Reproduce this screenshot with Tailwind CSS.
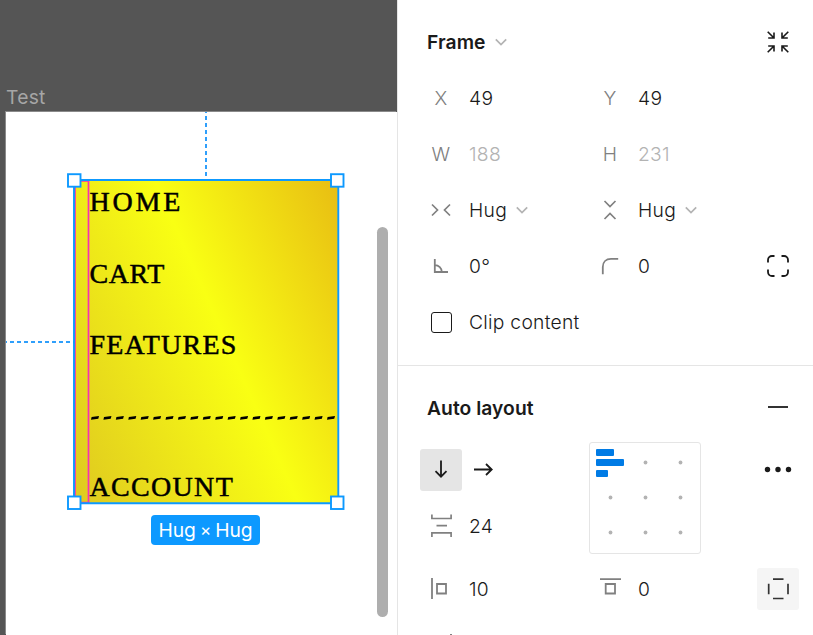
<!DOCTYPE html>
<html lang="en">
<head>
<meta charset="utf-8">
<title>Test</title>
<script src="https://cdn.jsdelivr.net/npm/@tailwindcss/browser@4"></script>
</head>
<body class="w-[813px] h-[635px] overflow-hidden bg-white font-['Inter','Liberation_Sans',sans-serif] font-[350] text-[19.25px] leading-[28px] tracking-[0.27px] text-[#1a1a1a]">
<div class="flex h-[635px] w-[813px]">
  <!-- Canvas -->
  <main class="relative w-[397px] h-[635px] shrink-0 overflow-hidden bg-[#555555]">
    <div class="absolute left-[6px] top-[83px] font-normal text-[#a6a6a6]">Test</div>
    <div class="absolute left-[6px] top-[112px] w-[391px] h-[523px] bg-white shadow-[-1px_-1px_0_#8a8a8a]"></div>
    <svg class="absolute left-0 top-0" width="397" height="635" viewBox="0 0 397 635" fill="none">
      <path d="M206 112V180" stroke="#2f9ffb" stroke-width="2" stroke-dasharray="4 3" stroke-dashoffset="3"/>
      <path d="M6 342H74" stroke="#2f9ffb" stroke-width="2" stroke-dasharray="4 3" stroke-dashoffset="3"/>
    </svg>
    <div class="absolute left-[74px] top-[180px] w-[264px] h-[323px] bg-[linear-gradient(66deg,#dfc820_0%,#f9ff13_55%,#e8bd13_100%)]">
      <svg class="ml-[15px] mt-[6px]" width="240" height="317" fill="#000" stroke="#000" stroke-width="0.5" font-family="Liberation Serif, serif" font-size="28" font-weight="400">
        <text x="0.500" y="25" textLength="91" lengthAdjust="spacing">HOME</text>
        <text x="0.500" y="96.500" textLength="75" lengthAdjust="spacing">CART</text>
        <text x="0.500" y="168" textLength="147" lengthAdjust="spacing">FEATURES</text>
        <text x="0.500" y="310" textLength="143.500" lengthAdjust="spacing">ACCOUNT</text>
      </svg>
    </div>
    <svg class="absolute left-0 top-0" width="397" height="635" viewBox="0 0 397 635" fill="none">
      <g id="dashes" fill="#000"></g>
      <path d="M75 181H88.500V502.500H75Z" stroke="#f531b3" stroke-width="1.700"/>
      <path d="M74 180H338.300V503.300H74Z" stroke="#0d99ff" stroke-width="1.900"/>
      <g fill="#fff" stroke="#0d99ff" stroke-width="1.900">
        <rect x="68" y="174.200" width="12.500" height="12.500"/>
        <rect x="331" y="174.200" width="12.500" height="12.500"/>
        <rect x="68" y="496.500" width="12.500" height="12.500"/>
        <rect x="331" y="496.500" width="12.500" height="12.500"/>
      </g>
    </svg>
    <div class="absolute left-[151px] top-[515px] flex w-[109px] h-[30px] items-center justify-center gap-[4px] rounded-[4px] bg-[#0d99ff] font-normal text-white tracking-[0px]"><span>Hug</span><span class="text-[17px]">×</span><span>Hug</span></div>
    <div class="absolute left-[377px] top-[227px] w-[11px] h-[390px] rounded-full bg-[#aeaeae]"></div>
  </main>

  <!-- Properties -->
  <aside class="w-[416px] h-[635px] shrink-0 overflow-hidden bg-white border-l border-[#e5e5e5]">
    <section class="h-[366px] pt-[14px] pl-[22px] border-b border-[#e5e5e5]">
      <div class="flex h-[56px] items-center">
        <h2 class="ml-[7px] font-semibold tracking-[0.1px]">Frame</h2>
        <svg class="ml-[9px]" width="12" height="8" fill="none" stroke="#b3b3b3" stroke-width="1.700"><path d="M.8 1.300L6 6.500l5.200-5.200"/></svg>
        <div class="flex-1"></div>
        <div class="mr-[14px] flex size-[42px] items-center justify-center">
          <svg width="24" height="24" fill="none" stroke="#1a1a1a" stroke-width="1.600"><path d="M1.700 1.700L8 8M8 2.500V8H2.200M22.300 1.700L16 8M16 2.500V8h5.800M1.700 22.300L8 16M8 21.500V16H2.200M22.300 22.300L16 16M16 21.500V16h5.800"/></svg>
        </div>
      </div>
      <div class="grid grid-cols-[42px_127px_42px_126px_42px] auto-rows-[56px] items-center">
        <span class="text-center text-[#808080] font-light">X</span><span class="pl-[7px]">49</span>
        <span class="text-center text-[#808080] font-light">Y</span><span class="pl-[7px]">49</span><span></span>
        <span class="text-center text-[#808080] font-light">W</span><span class="pl-[7px] text-[#b3b3b3]">188</span>
        <span class="text-center text-[#808080] font-light">H</span><span class="pl-[7px] text-[#b3b3b3]">231</span><span></span>

        <svg class="mx-auto" width="20" height="14" fill="none" stroke="#808080" stroke-width="1.700"><path d="M1 1.500L6.500 7 1 12.500M19 1.500L13.500 7l5.500 5.500"/></svg>
        <span class="flex items-center gap-[9px] pl-[7px]">Hug<svg width="12" height="8" fill="none" stroke="#b3b3b3" stroke-width="1.700"><path d="M.8 1.300L6 6.500l5.200-5.200"/></svg></span>
        <svg class="mx-auto" width="14" height="20" fill="none" stroke="#808080" stroke-width="1.700"><path d="M1.500 1L7 6.500 12.500 1M1.500 19L7 13.500l5.500 5.500"/></svg>
        <span class="flex items-center gap-[9px] pl-[7px]">Hug<svg width="12" height="8" fill="none" stroke="#b3b3b3" stroke-width="1.700"><path d="M.8 1.300L6 6.500l5.200-5.200"/></svg></span><span></span>

        <svg class="mx-auto" width="16" height="16" fill="none" stroke="#808080" stroke-width="1.800"><path d="M1.800 1V14H15M1.800 7.200c4 0 7 2.700 7 6.800"/></svg>
        <span class="pl-[7px]">0°</span>
        <svg class="mx-auto" width="18" height="18" fill="none" stroke="#808080" stroke-width="1.800"><path d="M1.800 17.200V10C1.800 5 5 1.900 10 1.900h7.200"/></svg>
        <span class="pl-[7px]">0</span>
        <svg class="mx-auto" width="24" height="24" fill="none" stroke="#1a1a1a" stroke-width="1.800"><path d="M2 8.500V6a4 4 0 0 1 4-4h2.500M15.500 2H18a4 4 0 0 1 4 4v2.500M22 15.500V18a4 4 0 0 1-4 4h-2.500M8.500 22H6a4 4 0 0 1-4-4v-2.500"/></svg>

        <span class="mx-auto size-[21px] rounded-[3px] border border-[#1a1a1a]"></span>
        <span class="col-span-4 pl-[7px]">Clip content</span>
      </div>
    </section>

    <section class="pt-[14px] pl-[22px]">
      <div class="flex h-[56px] items-center justify-between">
        <h2 class="ml-[7px] font-semibold tracking-[0.05px]">Auto layout</h2>
        <span class="mr-[25px] mb-[3px] h-[2px] w-[20px] bg-[#333]"></span>
      </div>
      <div class="grid grid-cols-[42px_127px_42px_126px_42px] grid-rows-[68px_44px_82px_40px]">
        <div class="mt-[13px] flex size-[42px] items-center justify-center rounded-[3px] bg-[#e5e5e5]">
          <svg width="14" height="20" fill="none" stroke="#1a1a1a" stroke-width="1.800"><path d="M7 .5V16.500M1.500 11.200L7 16.700l5.500-5.500"/></svg>
        </div>
        <div class="mt-[12px] flex h-[42px] items-center pl-[12px]">
          <svg width="20" height="14" fill="none" stroke="#1a1a1a" stroke-width="1.800"><path d="M0 7.500H18M12 2L17.700 7.500 12 13"/></svg>
        </div>
        <div class="col-span-2 row-span-2 mt-[6px] size-[112px] rounded-[3px] border border-[#e5e5e5]">
          <svg width="110" height="110">
            <g fill="#007be5"><rect x="6" y="6" width="18" height="7" rx="1"/><rect x="6" y="16" width="28" height="7" rx="1"/><rect x="6" y="27" width="12" height="7" rx="1"/></g>
            <g fill="#b3b3b3"><circle cx="55.500" cy="19.500" r="1.900"/><circle cx="90.500" cy="19.500" r="1.900"/><circle cx="20.500" cy="54.500" r="1.900"/><circle cx="55.500" cy="54.500" r="1.900"/><circle cx="90.500" cy="54.500" r="1.900"/><circle cx="20.500" cy="89.500" r="1.900"/><circle cx="55.500" cy="89.500" r="1.900"/><circle cx="90.500" cy="89.500" r="1.900"/></g>
          </svg>
        </div>
        <div class="mt-[13px] flex h-[42px] items-center justify-center">
          <svg width="28" height="8" fill="#1a1a1a"><circle cx="3.500" cy="3.500" r="2.700"/><circle cx="14" cy="3.500" r="2.700"/><circle cx="24.500" cy="3.500" r="2.700"/></svg>
        </div>
        <div class="flex items-center justify-center">
          <svg width="22" height="24" fill="none" stroke="#808080" stroke-width="1.700"><path d="M1.900 0.500V4.500H21.100V0.500M6.500 11.700H17M1.900 23V18.800H21.100V23"/></svg>
        </div>
        <div class="flex items-center pl-[7px]">24</div>
        <div></div>
        <div class="flex items-center justify-center">
          <svg class="-ml-[4px]" width="18" height="22" fill="none" stroke="#808080" stroke-width="1.800"><path d="M2 0V21M7 6H16V15.500H7Z"/></svg>
        </div>
        <div class="flex items-center pl-[7px]">10</div>
        <div class="flex items-center justify-center">
          <svg width="22" height="22" fill="none" stroke="#808080" stroke-width="1.800"><path d="M1 1.200H22M6.700 6H16V15.500H6.700Z"/></svg>
        </div>
        <div class="flex items-center pl-[7px]">0</div>
        <div class="flex size-[42px] items-center justify-center self-center rounded-[3px] bg-[#f5f5f5]">
          <svg width="22" height="22" fill="none" stroke="#333" stroke-width="1.700"><path d="M6 1.200H16.500M6 20.500H16.500M1.700 5.700V16.200M21 5.700V16.200"/></svg>
        </div>
        <div class="relative"><span class="absolute left-[30px] top-[4px] h-[2px] w-[2px] bg-[#808080]"></span></div>
      </div>
    </section>
  </aside>
</div>
<script>
  // Hand-drawn style divider: evenly spaced slanted dashes
  const g = document.getElementById('dashes');
  for (let i = 0; i < 20; i++) {
    const x = 91 + i * 12.420;
    const p = document.createElementNS('http://www.w3.org/2000/svg', 'path');
    p.setAttribute('d', `M${x + .6} 417L${x + 8} 416L${x + 7.300} 418.700L${x} 419.700Z`);
    g.appendChild(p);
  }
</script>
</body>
</html>
